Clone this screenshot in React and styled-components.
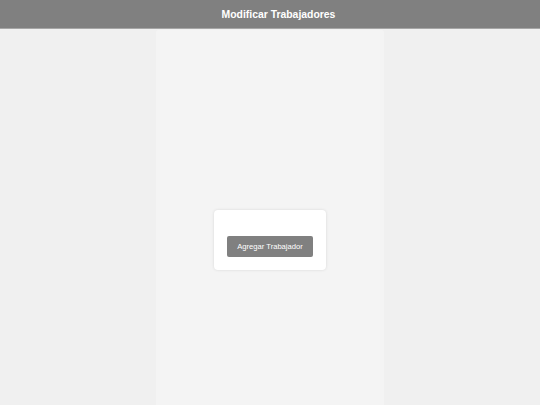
import React from 'react'
import styled, { createGlobalStyle } from "styled-components";

const GlobalStyle = createGlobalStyle`
  html, body {
    margin: 0;
    padding: 0;
    background: #f0f0f0;
    font-family: "Liberation Sans", Arial, sans-serif;
  }
`;

const App = () => {
  return (
    <>
      <GlobalStyle />
      <Header>
        <h1>Modificar Trabajadores</h1>
      </Header>
      <Main>
        <Column>
          <Card>
            <AddButton>Agregar Trabajador</AddButton>
          </Card>
        </Column>
      </Main>
    </>
  );
};

const Header = styled.header`
  height: 28px;
  background: #808080;
  border-bottom: 1px solid #a6a6a6;
  display: flex;
  align-items: center;
  justify-content: center;
  h1 {
    margin: 0;
    padding-left: 17px;
    color: #ffffff;
    font-size: 10.4px;
    font-weight: bold;
  }
`;

const Main = styled.main`
  display: flex;
  justify-content: center;
  padding-top: 1px;
`;

const Column = styled.div`
  width: 228px;
  height: 376px;
  background: #f4f4f4;
  border-radius: 3px 3px 0 0;
  display: flex;
  flex-direction: column;
  align-items: center;
  padding-top: 180px;
  box-sizing: border-box;
`;

const Card = styled.div`
  width: 112px;
  height: 60px;
  box-sizing: border-box;
  background: #ffffff;
  border-radius: 4px;
  box-shadow: 0 0 3px rgba(0, 0, 0, 0.12);
  display: flex;
  justify-content: center;
  padding-top: 26px;
`;

const AddButton = styled.button`
  width: 86px;
  height: 21px;
  border: none;
  border-radius: 2px;
  background: #808080;
  color: #ffffff;
  font-family: "Liberation Sans", Arial, sans-serif;
  font-size: 7.6px;
  padding: 0;
  cursor: pointer;
`;

export default App;
